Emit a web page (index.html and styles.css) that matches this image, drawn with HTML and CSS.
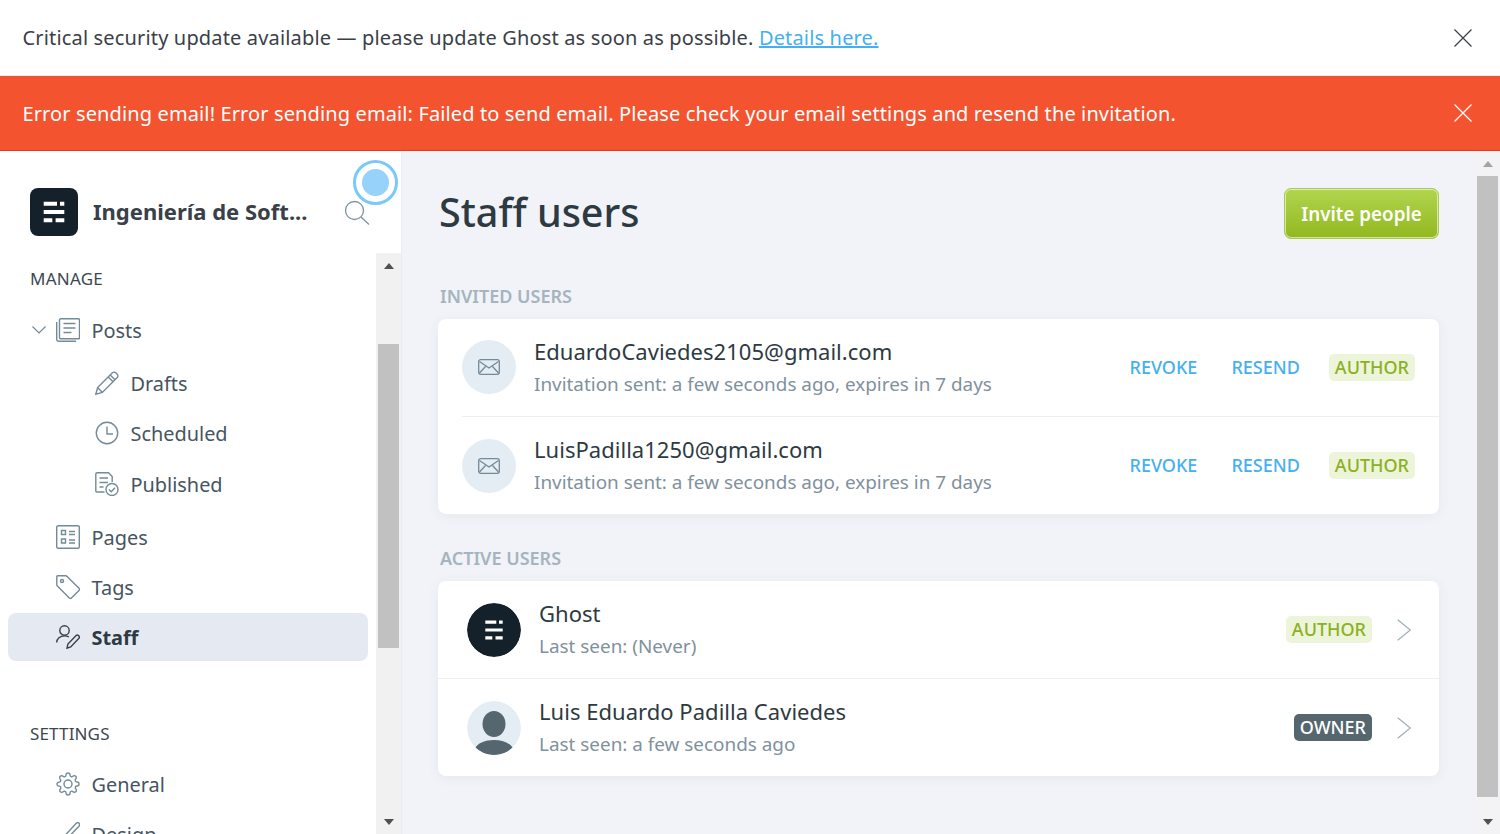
FILE: index.html
```html
<!DOCTYPE html>
<html>
<head>
    <title>Staff users</title>
    <link rel="stylesheet" href="styles.css">
</head>
<body>
    <div class="alert">
        <p>Critical security update available — please update Ghost as soon as possible. <a href="#">Details here.</a></p>
        <svg class="alert-close" viewBox="0 0 18 18"><path d="M.5.5l17 17M17.5.5l-17 17"/></svg>
    </div>
    <div class="alert alert-error">
        <p>Error sending email! Error sending email: Failed to send email. Please check your email settings and resend the invitation.</p>
        <svg class="alert-close" viewBox="0 0 18 18"><path d="M.5.5l17 17M17.5.5l-17 17"/></svg>
    </div>

    <div class="app">
        <aside class="sidebar">
            <div class="side-head">
                <svg class="logo" viewBox="0 0 48 48">
                    <rect width="48" height="48" rx="8" fill="#15212a"/>
                    <path fill="#fff" d="M13.7 13.7h13.3v4H13.7zM30 13.7h4.3v4H30zM13.7 22h20.6v4H13.7zM13.7 30.3h8.6v4h-8.6zM25.6 30.3h8.7v4h-8.7z"/>
                </svg>
                <span class="site-name">Ingeniería de Soft...</span>
                <svg class="search" viewBox="0 0 26 26"><circle cx="10.5" cy="10.5" r="9"/><path d="M17 17l8 7.5"/></svg>
                <span class="pulse"></span>
            </div>
            <div class="side-body">
                <nav class="side-nav">
                    <h3 class="nav-title">MANAGE</h3>
                    <ul class="nav-list">
                        <li class="nav-item">
                            <svg class="nav-caret" viewBox="0 0 14 8"><path d="M.5.5L7 7 13.5.5"/></svg>
                            <svg class="icon" viewBox="0 0 24 24"><rect x="3.5" y=".8" width="20" height="20" rx="1.2"/><path d="M.7 4v17.6a1.7 1.7 0 0 0 1.7 1.7H20M7.5 5.5h12M7.5 10h12M7.5 14.5h8"/></svg>
                            <span>Posts</span>
                        </li>
                        <li>
                            <ul class="nav-sub">
                                <li class="nav-item">
                                    <svg class="icon" viewBox="0 0 24 24"><path d="M.8 23.2l1.8-6.6L17.4 1.8a2.4 2.4 0 0 1 3.4 0l1.4 1.4a2.4 2.4 0 0 1 0 3.4L7.4 21.4zM2.6 16.6l4.8 4.8M15.2 4l4.8 4.8M13.2 6l4.8 4.8"/></svg>
                                    <span>Drafts</span>
                                </li>
                                <li class="nav-item">
                                    <svg class="icon" viewBox="0 0 24 24"><circle cx="12" cy="12" r="10.7"/><path d="M12 5.5V13h6"/></svg>
                                    <span>Scheduled</span>
                                </li>
                                <li class="nav-item">
                                    <svg class="icon" viewBox="0 0 24 24"><path d="M9.5 20H2a1.2 1.2 0 0 1-1.2-1.2V2A1.2 1.2 0 0 1 2 .8h11.5l3.7 3.7V10M4.5 6H13M4.5 10.5H13M4.5 15h4"/><circle cx="17" cy="17.5" r="6"/><path d="M14 17.5l2.2 2.2 3.8-4"/></svg>
                                    <span>Published</span>
                                </li>
                            </ul>
                        </li>
                        <li class="nav-item">
                            <svg class="icon" viewBox="0 0 24 24"><rect x=".7" y=".7" width="22.6" height="22.6" rx="1.5"/><path d="M5.5 5.5h4v4h-4zM5.5 14h4v4h-4zM13 6.5h6M13 9.5h6M13 15h6M13 18h6"/></svg>
                            <span>Pages</span>
                        </li>
                        <li class="nav-item">
                            <svg class="icon" viewBox="0 0 24 24"><path d="M1.5.8h8.2a2 2 0 0 1 1.4.6L23 13.3a1.5 1.5 0 0 1 0 2.1L15.4 23a1.5 1.5 0 0 1-2.1 0L1.4 11.1a2 2 0 0 1-.6-1.4V1.5a.7.7 0 0 1 .7-.7z"/><circle cx="6" cy="6" r="1.5"/></svg>
                            <span>Tags</span>
                        </li>
                        <li class="nav-item nav-active">
                            <svg class="icon" viewBox="0 0 24 24"><circle cx="8.5" cy="5.5" r="4.7"/><path d="M.7 17.5c0-4 3.4-6.6 7.8-6.6 1.7 0 3.2.4 4.5 1.1M11 23.2l.9-4.2 8-8.2a2 2 0 0 1 2.8 0 2 2 0 0 1 0 2.8l-8 8.3z"/></svg>
                            <span>Staff</span>
                        </li>
                    </ul>
                    <h3 class="nav-title nav-title-next">SETTINGS</h3>
                    <ul class="nav-list">
                        <li class="nav-item">
                            <svg class="icon" viewBox="0 0 24 24"><path d="M12 16a4 4 0 1 0 0-8 4 4 0 0 0 0 8z"/><path d="M19.4 15a1.65 1.65 0 0 0 .33 1.82l.06.06a2 2 0 0 1 0 2.83 2 2 0 0 1-2.83 0l-.06-.06a1.65 1.65 0 0 0-1.82-.33 1.65 1.65 0 0 0-1 1.51V21a2 2 0 0 1-2 2 2 2 0 0 1-2-2v-.09A1.65 1.65 0 0 0 9 19.4a1.65 1.65 0 0 0-1.82.33l-.06.06a2 2 0 0 1-2.83 0 2 2 0 0 1 0-2.83l.06-.06a1.65 1.65 0 0 0 .33-1.82 1.65 1.65 0 0 0-1.51-1H3a2 2 0 0 1-2-2 2 2 0 0 1 2-2h.09A1.65 1.65 0 0 0 4.6 9a1.65 1.65 0 0 0-.33-1.82l-.06-.06a2 2 0 0 1 0-2.83 2 2 0 0 1 2.83 0l.06.06a1.65 1.65 0 0 0 1.82.33H9a1.65 1.65 0 0 0 1-1.51V3a2 2 0 0 1 2-2 2 2 0 0 1 2 2v.09a1.65 1.65 0 0 0 1 1.51 1.65 1.65 0 0 0 1.82-.33l.06-.06a2 2 0 0 1 2.83 0 2 2 0 0 1 0 2.83l-.06.06a1.65 1.65 0 0 0-.33 1.82V9a1.65 1.65 0 0 0 1.51 1H21a2 2 0 0 1 2 2 2 2 0 0 1-2 2h-.09a1.65 1.65 0 0 0-1.51 1z"/></svg>
                            <span>General</span>
                        </li>
                        <li class="nav-item">
                            <svg class="icon" viewBox="0 0 24 24"><path d="M23 1.2c-.8-.8-2-.6-3 .3L9 13.5l2.5 2.5L22.7 4.5c.9-1 1.1-2.5.3-3.3zM8.5 14.5c-3 .3-3.5 2.500-4 4.500-.3 1.200-1.500 2-3.500 2.500 3.500 2 8.500 1.500 10-1.500.8-1.500.5-2.700 0-3"/></svg>
                            <span>Design</span>
                        </li>
                    </ul>
                </nav>
                <div class="scrollbar scrollbar-nav">
                    <span class="arrow arrow-up"></span>
                    <span class="thumb"></span>
                    <span class="arrow arrow-down"></span>
                </div>
            </div>
        </aside>

        <main class="main">
            <div class="content">
                <header class="page-head">
                    <h1>Staff users</h1>
                    <button type="button" class="btn-invite">Invite people</button>
                </header>

                <h2 class="section-title">INVITED USERS</h2>
                <section class="card">
                    <div class="user-row invite-row">
                        <div class="avatar avatar-mail">
                            <svg viewBox="0 0 22 16"><rect x=".7" y=".7" width="20.6" height="14.6" rx="2"/><path d="M1.5 2.5L11 9l9.5-6.5M1.5 14l6-6.5M20.5 14l-6-6.5"/></svg>
                        </div>
                        <div class="user-text">
                            <h3>EduardoCaviedes2105@gmail.com</h3>
                            <p>Invitation sent: a few seconds ago, expires in 7 days</p>
                        </div>
                        <a class="action" href="#">REVOKE</a>
                        <a class="action" href="#">RESEND</a>
                        <span class="badge badge-author">AUTHOR</span>
                    </div>
                    <div class="user-row invite-row">
                        <div class="avatar avatar-mail">
                            <svg viewBox="0 0 22 16"><rect x=".7" y=".7" width="20.6" height="14.6" rx="2"/><path d="M1.5 2.5L11 9l9.5-6.5M1.5 14l6-6.5M20.5 14l-6-6.5"/></svg>
                        </div>
                        <div class="user-text">
                            <h3>LuisPadilla1250@gmail.com</h3>
                            <p>Invitation sent: a few seconds ago, expires in 7 days</p>
                        </div>
                        <a class="action" href="#">REVOKE</a>
                        <a class="action" href="#">RESEND</a>
                        <span class="badge badge-author">AUTHOR</span>
                    </div>
                </section>

                <h2 class="section-title section-title-next">ACTIVE USERS</h2>
                <section class="card">
                    <div class="user-row active-row">
                        <svg class="avatar" viewBox="0 0 54 54">
                            <circle cx="27" cy="27" r="27" fill="#15212a"/>
                            <path fill="#fff" d="M18.3 17.5h11v3.2h-11zM32 17.5h3.7v3.2H32zM18.3 25.4h17.4v3.2H18.3zM18.3 33.3h7v3.2h-7zM28.500 33.3h7.200v3.2h-7.200z"/>
                        </svg>
                        <div class="user-text">
                            <h3>Ghost</h3>
                            <p>Last seen: (Never)</p>
                        </div>
                        <span class="badge badge-author">AUTHOR</span>
                        <svg class="chevron" viewBox="0 0 14 22"><path d="M.7.7L13.3 11 .7 21.3"/></svg>
                    </div>
                    <div class="user-row active-row">
                        <svg class="avatar" viewBox="0 0 54 54">
                            <circle cx="27" cy="27" r="27" fill="#e5edf4"/>
                            <ellipse cx="27" cy="23" rx="11.5" ry="13" fill="#55666e"/>
                            <path fill="#55666e" d="M8 47.3c3-5.3 10-8.3 19-8.3s16 3 19 8.3A27 27 0 0 1 27 54 27 27 0 0 1 8 47.3z"/>
                        </svg>
                        <div class="user-text">
                            <h3>Luis Eduardo Padilla Caviedes</h3>
                            <p>Last seen: a few seconds ago</p>
                        </div>
                        <span class="badge badge-owner">OWNER</span>
                        <svg class="chevron" viewBox="0 0 14 22"><path d="M.7.7L13.3 11 .7 21.3"/></svg>
                    </div>
                </section>
            </div>
            <div class="scrollbar scrollbar-main">
                <span class="arrow arrow-up"></span>
                <span class="thumb"></span>
                <span class="arrow arrow-down"></span>
            </div>
        </main>
    </div>
</body>
</html>
```

FILE: styles.css
```css
* {
    box-sizing: border-box;
}
html, body {
    height: 100%;
}
body {
    margin: 0;
    display: flex;
    flex-direction: column;
    overflow: hidden;
    font-family: "Noto Sans", sans-serif;
    color: #394047;
    background-color: #fff;
}
h1, h2, h3, p, ul {
    margin: 0;
    padding: 0;
    font-weight: normal;
}
ul {
    list-style: none;
}

/* Top notifications */
.alert {
    flex: none;
    height: 76px;
    padding: 0 28px 0 22.5px;
    display: flex;
    align-items: center;
    justify-content: space-between;
    font-size: 20px;
    letter-spacing: 0.16px;
    border-bottom: 1px solid #ececec;
}
.alert a {
    color: #45b0f1;
}
.alert-close {
    width: 18px;
    height: 18px;
    fill: none;
    stroke: #394047;
    stroke-width: 1.2;
}
.alert-error {
    height: 75px;
    letter-spacing: 0.12px;
    color: #fff;
    background-color: #f3542f;
    border-bottom: 1px solid #e5391a;
}
.alert-error .alert-close {
    stroke: #fff;
}

.app {
    flex: 1;
    min-height: 0;
    display: flex;
}

/* Sidebar */
.sidebar {
    flex: none;
    width: 402px;
    display: flex;
    flex-direction: column;
    border-right: 1px solid #e8edf2;
    background-color: #fff;
}
.side-head {
    position: relative;
    flex: none;
    height: 102px;
    padding: 37px 0 0 30px;
    display: flex;
    align-items: flex-start;
}
.logo {
    width: 48px;
    height: 48px;
}
.site-name {
    margin: 8px 0 0 15px;
    width: 251px;
    font-size: 22px;
    line-height: 30px;
    font-weight: 700;
}
.search {
    margin-top: 12px;
    width: 26px;
    height: 26px;
    fill: none;
    stroke: #7d929e;
    stroke-width: 1.3;
}
.pulse {
    position: absolute;
    left: 353px;
    top: 9px;
    width: 45px;
    height: 45px;
    border: 3px solid #7cc8f8;
    border-radius: 50%;
    background: radial-gradient(circle, #96d2f9 13px, #fff 14px);
}
.side-body {
    flex: 1;
    min-height: 0;
    display: flex;
}
.side-nav {
    flex: 1;
    min-width: 0;
    overflow: hidden;
}
.nav-title {
    margin: 14px 0 15px 30px;
    font-size: 17px;
    line-height: 24px;
    letter-spacing: 0.25px;
    color: #3c4750;
}
.nav-title-next {
    margin-top: 61px;
    margin-bottom: 14px;
    letter-spacing: 0.15px;
}
.nav-list {
    display: flex;
    flex-direction: column;
    gap: 2px;
}
.nav-sub {
    margin: 3px 0;
    display: flex;
    flex-direction: column;
    gap: 2px;
}
.nav-sub .nav-item:last-child {
    margin-top: 1px;
}
.nav-item {
    position: relative;
    flex: none;
    height: 48px;
    margin: 0 8px;
    padding-left: 48px;
    display: flex;
    align-items: center;
    gap: 11.5px;
    border-radius: 8px;
    font-size: 19.9px;
    color: #46555f;
}
.nav-sub .nav-item {
    padding-left: 87px;
}
.nav-active {
    background-color: #e5eaf2;
    color: #2e3a42;
    font-weight: 700;
}
.nav-caret {
    position: absolute;
    left: 24px;
    top: 20px;
    width: 14px;
    height: 8px;
    fill: none;
    stroke: #738a97;
    stroke-width: 1.2;
}
.icon {
    flex: none;
    width: 24px;
    height: 24px;
    fill: none;
    stroke: #738a97;
    stroke-width: 1.4;
}
.nav-active .icon {
    stroke: #394047;
}

/* Fake scrollbars, as the browser drew them */
.scrollbar {
    flex: none;
    width: 25px;
    padding-left: 2px;
    display: flex;
    flex-direction: column;
    background-color: #f1f1f1;
}
.thumb {
    width: 21px;
    background-color: #c1c1c1;
}
.arrow {
    flex: none;
    height: 25px;
    display: flex;
    align-items: center;
    justify-content: center;
    width: 21px;
}
.arrow::before {
    content: "";
    border-left: 5.5px solid transparent;
    border-right: 5.5px solid transparent;
}
.arrow-up::before {
    border-bottom: 6px solid #505050;
}
.arrow-down::before {
    border-top: 6px solid #505050;
}
.arrow-down {
    margin-top: auto;
}
.scrollbar-nav .thumb {
    height: 304px;
    margin-top: 66px;
}
.scrollbar-main {
    background-color: #f3f3f5;
}
.scrollbar-main .arrow-up::before {
    border-bottom-color: #a3a3a3;
}
.scrollbar-main .thumb {
    height: 621px;
}

/* Main column */
.main {
    flex: 1;
    min-width: 0;
    display: flex;
    background-color: #f1f3f8;
}
.content {
    flex: 1;
    min-width: 0;
    padding: 37px 36px 0;
}
.page-head {
    height: 51px;
    display: flex;
    align-items: center;
    justify-content: space-between;
}
.page-head h1 {
    margin: -2px 0 0 1px;
    font-size: 39.5px;
    line-height: 51px;
    font-weight: 500;
    color: #2e3a42;
}
.btn-invite {
    width: 155px;
    height: 51px;
    padding: 0;
    font: 600 18.8px "Noto Sans", sans-serif;
    color: #fff;
    cursor: pointer;
    border: 1px solid #a8cb4a;
    border-radius: 7px;
    background: linear-gradient(#b2d54f, #92b81f);
    box-shadow: inset 0 0 0 1px rgba(255, 255, 255, 0.6);
}
.section-title {
    margin: 45px 0 11px 2px;
    font-size: 18px;
    line-height: 24px;
    font-weight: 600;
    color: #a5b4be;
}
.section-title-next {
    margin-top: 32px;
}
.card {
    background-color: #fff;
    border-radius: 8px;
    box-shadow: 0 2px 12px rgba(60, 80, 100, 0.07);
}

/* User rows */
.user-row {
    height: 97px;
    display: flex;
    align-items: center;
}
.invite-row {
    margin-left: 24px;
    padding-right: 24px;
}
.invite-row:first-child .avatar {
    margin-bottom: 1px;
}
.invite-row + .invite-row {
    height: 98px;
    border-top: 1px solid #e9eff4;
}
.active-row {
    padding: 0 28px 0 29px;
}
.active-row + .active-row {
    height: 98px;
    border-top: 1px solid #e9eff4;
}
.avatar {
    flex: none;
    width: 54px;
    height: 54px;
    border-radius: 50%;
}
.avatar-mail {
    display: flex;
    align-items: center;
    justify-content: center;
    background-color: #e5edf4;
}
.avatar-mail svg {
    margin-left: -1px;
    width: 22px;
    height: 16px;
    fill: none;
    stroke: #738a97;
    stroke-width: 1.3;
}
.user-text {
    flex: 1;
    min-width: 0;
    margin-left: 18px;
}
.user-text h3 {
    margin-bottom: 2px;
    font-size: 22px;
    line-height: 30px;
    letter-spacing: 0.03px;
    color: #2e3a42;
}
.user-text p {
    font-size: 18.9px;
    line-height: 32px;
    color: #7f919d;
}
.action {
    margin: 0 34px 2px 0;
    font-size: 18px;
    font-weight: 500;
    color: #45b0f1;
    text-decoration: none;
}
.action + .badge {
    margin-left: -5px;
}
.badge {
    height: 27px;
    padding: 0 6px 1px;
    display: flex;
    align-items: center;
    font-size: 18px;
    font-weight: 500;
    border-radius: 5px;
}
.badge-author {
    color: #8cb01f;
    background-color: #ecf5da;
}
.badge-owner {
    color: #fff;
    background-color: #55666e;
}
.chevron {
    flex: none;
    margin-left: 25px;
    width: 14px;
    height: 22px;
    fill: none;
    stroke: #9fb0bb;
    stroke-width: 1.2;
}
```
